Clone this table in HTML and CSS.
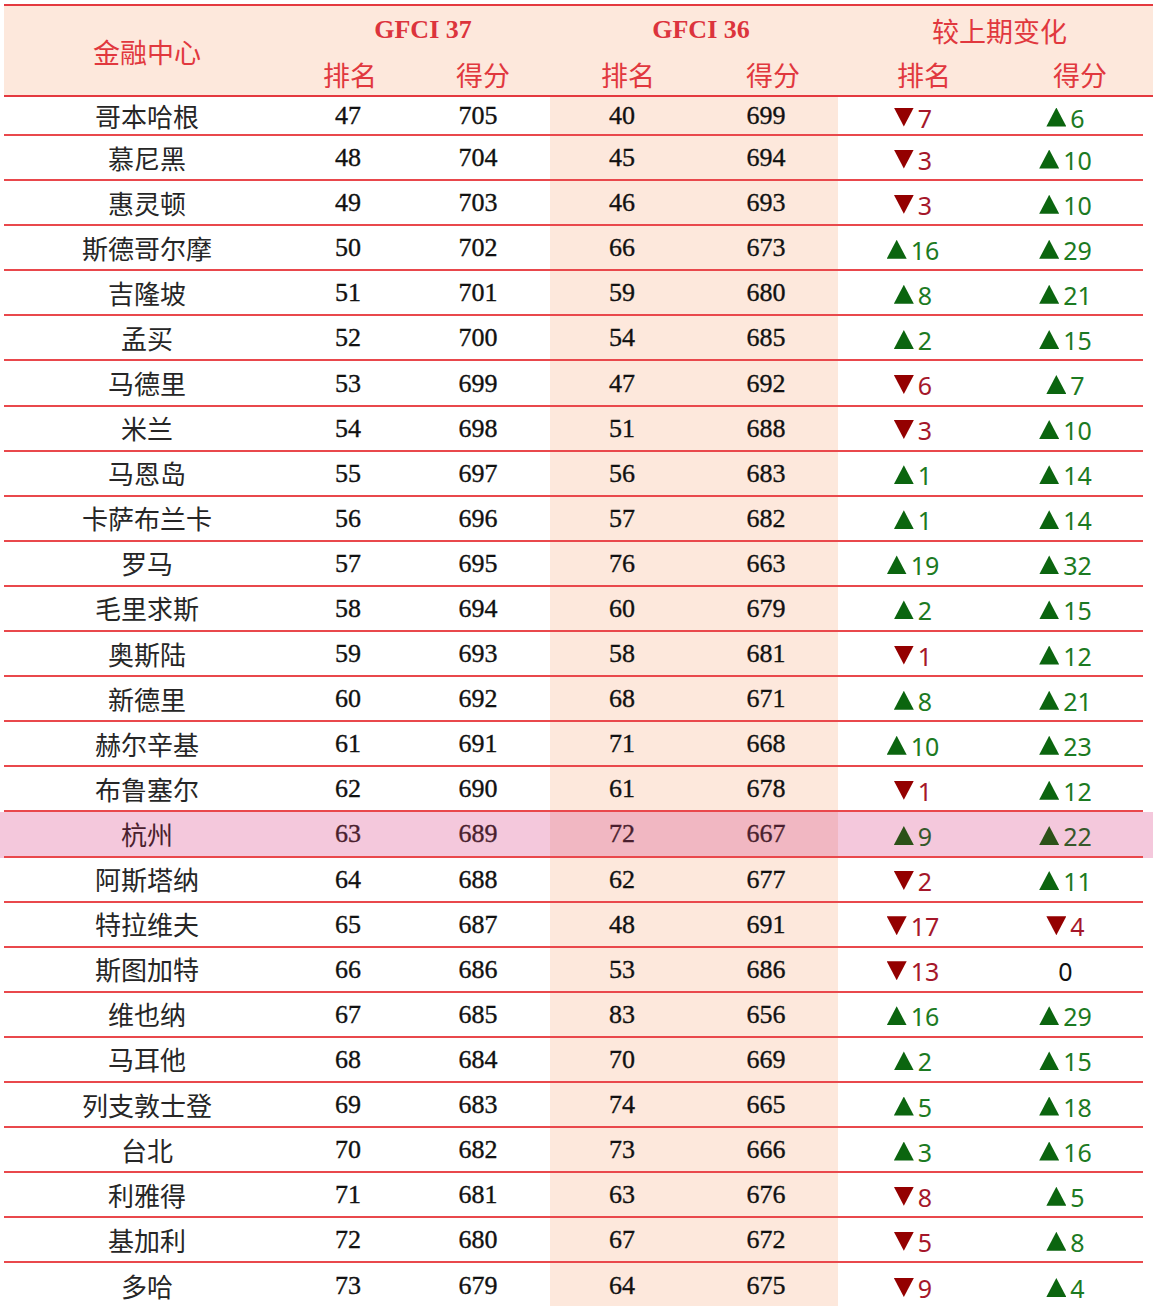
FILE: index.html
```html
<!DOCTYPE html>
<html lang="zh-CN">
<head>
<meta charset="utf-8">
<title>GFCI 37</title>
<link rel="stylesheet" href="styles.css">
</head>
<body>
<div class="table">
  <div class="head">
    <div class="h-center">金融中心</div>
    <div class="h-group gfci">GFCI 37</div>
    <div class="h-group gfci">GFCI 36</div>
    <div class="h-group">较上期变化</div>
    <div class="h-sub">排名</div>
    <div class="h-sub">得分</div>
    <div class="h-sub">排名</div>
    <div class="h-sub">得分</div>
    <div class="h-sub">排名</div>
    <div class="h-sub h-last">得分</div>
  </div>

  <div class="row first"><div class="city">哥本哈根</div><div class="num">47</div><div class="num">705</div><div class="num prev">40</div><div class="num prev">699</div><div class="chg dn">7</div><div class="chg up">6</div></div>
  <div class="row"><div class="city">慕尼黑</div><div class="num">48</div><div class="num">704</div><div class="num prev">45</div><div class="num prev">694</div><div class="chg dn">3</div><div class="chg up">10</div></div>
  <div class="row"><div class="city">惠灵顿</div><div class="num">49</div><div class="num">703</div><div class="num prev">46</div><div class="num prev">693</div><div class="chg dn">3</div><div class="chg up">10</div></div>
  <div class="row"><div class="city">斯德哥尔摩</div><div class="num">50</div><div class="num">702</div><div class="num prev">66</div><div class="num prev">673</div><div class="chg up">16</div><div class="chg up">29</div></div>
  <div class="row"><div class="city">吉隆坡</div><div class="num">51</div><div class="num">701</div><div class="num prev">59</div><div class="num prev">680</div><div class="chg up">8</div><div class="chg up">21</div></div>
  <div class="row"><div class="city">孟买</div><div class="num">52</div><div class="num">700</div><div class="num prev">54</div><div class="num prev">685</div><div class="chg up">2</div><div class="chg up">15</div></div>
  <div class="row"><div class="city">马德里</div><div class="num">53</div><div class="num">699</div><div class="num prev">47</div><div class="num prev">692</div><div class="chg dn">6</div><div class="chg up">7</div></div>
  <div class="row"><div class="city">米兰</div><div class="num">54</div><div class="num">698</div><div class="num prev">51</div><div class="num prev">688</div><div class="chg dn">3</div><div class="chg up">10</div></div>
  <div class="row"><div class="city">马恩岛</div><div class="num">55</div><div class="num">697</div><div class="num prev">56</div><div class="num prev">683</div><div class="chg up">1</div><div class="chg up">14</div></div>
  <div class="row"><div class="city">卡萨布兰卡</div><div class="num">56</div><div class="num">696</div><div class="num prev">57</div><div class="num prev">682</div><div class="chg up">1</div><div class="chg up">14</div></div>
  <div class="row"><div class="city">罗马</div><div class="num">57</div><div class="num">695</div><div class="num prev">76</div><div class="num prev">663</div><div class="chg up">19</div><div class="chg up">32</div></div>
  <div class="row"><div class="city">毛里求斯</div><div class="num">58</div><div class="num">694</div><div class="num prev">60</div><div class="num prev">679</div><div class="chg up">2</div><div class="chg up">15</div></div>
  <div class="row"><div class="city">奥斯陆</div><div class="num">59</div><div class="num">693</div><div class="num prev">58</div><div class="num prev">681</div><div class="chg dn">1</div><div class="chg up">12</div></div>
  <div class="row"><div class="city">新德里</div><div class="num">60</div><div class="num">692</div><div class="num prev">68</div><div class="num prev">671</div><div class="chg up">8</div><div class="chg up">21</div></div>
  <div class="row"><div class="city">赫尔辛基</div><div class="num">61</div><div class="num">691</div><div class="num prev">71</div><div class="num prev">668</div><div class="chg up">10</div><div class="chg up">23</div></div>
  <div class="row"><div class="city">布鲁塞尔</div><div class="num">62</div><div class="num">690</div><div class="num prev">61</div><div class="num prev">678</div><div class="chg dn">1</div><div class="chg up">12</div></div>
  <div class="hl">
    <div class="row"><div class="city">杭州</div><div class="num">63</div><div class="num">689</div><div class="num prev">72</div><div class="num prev">667</div><div class="chg up">9</div><div class="chg up">22</div></div>
  </div>
  <div class="row"><div class="city">阿斯塔纳</div><div class="num">64</div><div class="num">688</div><div class="num prev">62</div><div class="num prev">677</div><div class="chg dn">2</div><div class="chg up">11</div></div>
  <div class="row"><div class="city">特拉维夫</div><div class="num">65</div><div class="num">687</div><div class="num prev">48</div><div class="num prev">691</div><div class="chg dn">17</div><div class="chg dn">4</div></div>
  <div class="row"><div class="city">斯图加特</div><div class="num">66</div><div class="num">686</div><div class="num prev">53</div><div class="num prev">686</div><div class="chg dn">13</div><div class="chg zero">0</div></div>
  <div class="row"><div class="city">维也纳</div><div class="num">67</div><div class="num">685</div><div class="num prev">83</div><div class="num prev">656</div><div class="chg up">16</div><div class="chg up">29</div></div>
  <div class="row"><div class="city">马耳他</div><div class="num">68</div><div class="num">684</div><div class="num prev">70</div><div class="num prev">669</div><div class="chg up">2</div><div class="chg up">15</div></div>
  <div class="row"><div class="city">列支敦士登</div><div class="num">69</div><div class="num">683</div><div class="num prev">74</div><div class="num prev">665</div><div class="chg up">5</div><div class="chg up">18</div></div>
  <div class="row"><div class="city">台北</div><div class="num">70</div><div class="num">682</div><div class="num prev">73</div><div class="num prev">666</div><div class="chg up">3</div><div class="chg up">16</div></div>
  <div class="row"><div class="city">利雅得</div><div class="num">71</div><div class="num">681</div><div class="num prev">63</div><div class="num prev">676</div><div class="chg dn">8</div><div class="chg up">5</div></div>
  <div class="row"><div class="city">基加利</div><div class="num">72</div><div class="num">680</div><div class="num prev">67</div><div class="num prev">672</div><div class="chg dn">5</div><div class="chg up">8</div></div>
  <div class="row last"><div class="city">多哈</div><div class="num">73</div><div class="num">679</div><div class="num prev">64</div><div class="num prev">675</div><div class="chg dn">9</div><div class="chg up">4</div></div>
</div>
</body>
</html>
```

FILE: styles.css
```css
html, body {
  margin: 0;
  padding: 0;
  background: #ffffff;
}

.table {
  width: 1149px;
  margin-left: 4px;
  padding-top: 4px;
}

.head {
  display: grid;
  grid-template-columns: 286px 120px 146px 144px 146px 156px 151px;
  grid-template-rows: 46px 43px;
  background: #fde8dc;
  border-top: 2px solid #e4393f;
  border-bottom: 2px solid #e4393f;
  color: #e1383e;
  font-family: "Noto Sans CJK SC", "Noto Sans", sans-serif;
  font-size: 27px;
  line-height: 1;
}

.head > div {
  display: flex;
  align-items: center;
  justify-content: center;
}

.h-center {
  grid-row: 1 / span 2;
  grid-column: 1;
  padding-top: 2px;
}

.h-group {
  grid-column: span 2;
  padding-top: 2px;
}

.head .gfci {
  font-family: "Liberation Serif", "Tinos", "Times New Roman", serif;
  font-weight: bold;
  font-size: 26px;
  color: #dc343c;
}

.h-sub {
  padding-top: 2px;
}

.h-last {
  padding-left: 5px;
}

.row {
  display: grid;
  grid-template-columns: 286px 116px 144px 144px 144px 156px 149px;
  width: 1139px;
  height: 45.1px;
  box-sizing: border-box;
  border-bottom: 2px solid #e9484c;
}

.row.first {
  height: 39px;
}

.row.last {
  border-bottom: none;
}

.row > div {
  display: flex;
  align-items: center;
  justify-content: center;
  line-height: 1;
}

.row > .city {
  font-family: "Noto Sans CJK SC", "Noto Sans", sans-serif;
  font-size: 26px;
  color: #262626;
}

.row > .num {
  font-family: "Liberation Serif", "Tinos", "Times New Roman", serif;
  font-weight: normal;
  font-size: 26px;
  color: #111111;
  -webkit-text-stroke: 0.35px #111111;
  padding-top: 1px;
}

.row > .prev {
  background: #fde8dc;
}

.row > .chg {
  font-family: "Noto Sans", "Liberation Sans", sans-serif;
  font-size: 25px;
  gap: 4px;
  padding-top: 5px;
  padding-right: 6px;
}

.chg::before {
  content: "";
  display: block;
  width: 20px;
  height: 19px;
  margin-top: -2px;
}

.chg.zero::before {
  display: none;
}

.row > .chg.zero {
  color: #111111;
}

.row > .up {
  color: #1c7a22;
}

.up::before {
  background: #0b650f;
  clip-path: polygon(50% 0, 100% 100%, 0 100%);
}

.row > .dn {
  color: #a5172a;
}

.dn::before {
  background: #940000;
  clip-path: polygon(0 0, 100% 0, 50% 100%);
}

.hl {
  background: #f4c8dc;
  margin-left: -4px;
  padding-left: 4px;
  width: 1153px;
  box-sizing: border-box;
}

.hl .row > .prev {
  background: #f1b7c2;
}

.hl .row > .city {
  color: #4a1f2e;
}

.hl .row > .num {
  color: #4a1f2e;
  -webkit-text-stroke: 0.35px #4a1f2e;
}

.hl .row > .up {
  color: #36582a;
}

.hl .up::before {
  background: #2c5118;
}
```
